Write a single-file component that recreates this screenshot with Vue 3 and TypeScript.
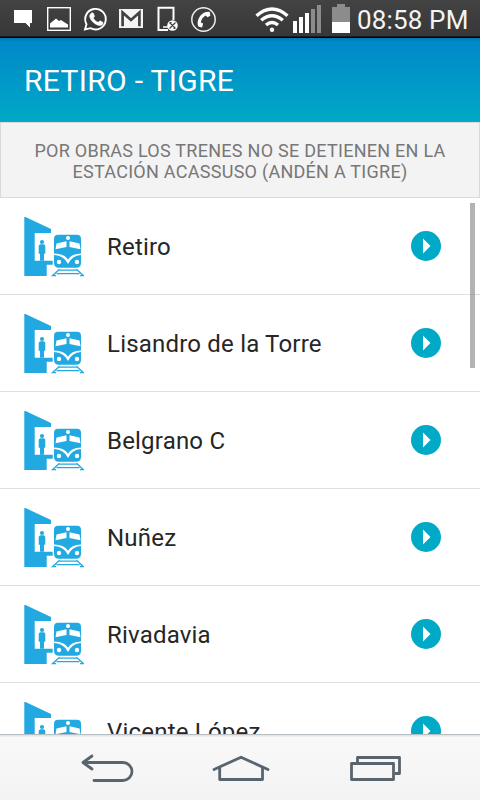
<script setup lang="ts">
const stations: string[] = ['Retiro', 'Lisandro de la Torre', 'Belgrano C', 'Nuñez', 'Rivadavia', 'Vicente López']
</script>

<template>
  <div class="screen">
    <div class="status">
      <svg class="status-icons" width="230" height="38" viewBox="0 0 230 38">
        <path d="M14 10h18v13h-2v4.500l-4.500-4.500H14z" fill="#fff" />
        <rect x="47.700" y="7.700" width="22.600" height="22.600" fill="none" stroke="#fff" stroke-width="1.400" />
        <path d="M50 27.500v-4l6-5 3 2.500 2-1 3 2 4 2.500v3z" fill="#fff" />
        <path d="M85 29.500l1.500-5.300a10.300 10.300 0 1 1 4 4z" fill="none" stroke="#fff" stroke-width="1.900" />
        <path d="M91.200 13.200c.8-.8 1.800-.7 2.200.1l1.100 2.700c.2.700-1.200 1.700-1 2.300 1 2 2.500 3.300 4.500 4 .7.200 1.500-1.700 2.100-1.500l2.700 1.400c.7.400-.1 2.300-1 2.800-1.700 1-3.600.6-6-.7-2.800-1.600-5.200-4.400-6-7-.4-1.700.2-3 1.400-4.100z" fill="#fff" stroke="#fff" stroke-width=".5" />
        <path d="M119 9h24v19h-24z" fill="#f4f4f4" />
        <path d="M122.600 26.300V12.500l8.400 7.500 8.400-7.500v13.800" fill="none" stroke="#424242" stroke-width="2.700" />
        <path d="M168 30h-9.500V7.800h15V20" fill="none" stroke="#fff" stroke-width="2" />
        <path d="M163 27h5" stroke="#fff" stroke-width="1.500" />
        <circle cx="172.500" cy="25.500" r="5.300" fill="#fff" />
        <path d="M169.500 22.500l6 6m0-6l-6 6M171 22l-.2 2.500M174 29l.2-2.500" stroke="#444" stroke-width="1.200" />
        <circle cx="203.500" cy="19.500" r="11.700" fill="none" stroke="#eee" stroke-width="1.500" />
        <path d="M206 12l3.600-.3.800 4-2.900 1.600-1.800-1.700c-2.500 1.300-4.400 4-4.900 7l2.300 1-1 3.800-3.500-.6c-1.700-2.300-1.200-6 .6-9.200 1.600-2.900 4-5 6.800-5.600z" fill="#fff" />
      </svg>
      <svg class="signal" width="112" height="38" viewBox="240 0 112 38">
        <g fill="none" stroke="#fff" stroke-width="3.400">
          <path d="M256.500 15.800q15.500-13.600 31 0" />
          <path d="M261.200 20.300q10.800-9.200 21.600 0" />
          <path d="M266 25q6-5.200 12 0" />
        </g>
        <circle cx="272" cy="29.800" r="2.200" fill="#fff" />
        <path d="M293 21h4v12h-4zM299 17h4v16h-4zM305 13h4v20h-4z" fill="#fff" />
        <path d="M311 9h4v24h-4zM317 5h4v28h-4zM337 4h8v3h5v15h-18V7h5z" fill="#8c8c8c" />
        <path d="M332 22h18v11h-18z" fill="#fff" />
      </svg>
      <span class="clock">08:58 PM</span>
    </div>

    <header class="header"><h1>RETIRO - TIGRE</h1></header>
    <div class="notice">POR OBRAS LOS TRENES NO SE DETIENEN EN LA<br />ESTACIÓN ACASSUSO (ANDÉN A TIGRE)</div>

    <main class="list">
      <div v-for="name in stations" :key="name" class="row">
        <svg class="station" width="60" height="60" viewBox="0 0 60 60">
          <g fill="#23a9e1">
            <path d="M.3 0h1.200L27 12v4H10.700v27.700h18v4h-6v11.300H.3z" />
            <circle cx="18" cy="25" r="2.100" />
            <path d="M16.500 27.300h3.200q1.600.3 1.600 2v7.400H20v7h-4v-7h-1.300v-7.400q0-1.700 1.800-2z" />
            <path d="M34 17.700h19q4 0 4 4v24q0 5-5 5H35q-5 0-5-5v-24q0-4 4-4z" />
          </g>
          <path d="M34.500 53.200h19M32.500 56.600h23M35.500 52.300l-7 6.400h3.500M52.500 52.300l7 6.400H56" fill="none" stroke="#23a9e1" stroke-width="1.300" />
          <g fill="#fff">
            <circle cx="44" cy="21" r="2" />
            <path d="M32.500 26.500l10-2.300v5.800L31.500 32.300zM55.500 26.500l-10-2.300v5.800L56.500 32.300z" />
            <circle cx="35" cy="45" r="2.200" />
            <circle cx="53" cy="45" r="2.200" />
            <path d="M30 36.500q11 .5 14 6.200 3-5.700 13-6.200v1.400q-9.500.8-13 9.100-3.500-8.300-14-9.100z" />
          </g>
        </svg>
        <span class="name">{{ name }}</span>
        <svg class="go" width="30" height="30" viewBox="0 0 30 30">
          <circle cx="15" cy="15" r="15" fill="#00a9c6" />
          <path d="M12 7.500l7.500 7.500-7.500 7.500z" fill="#fff" />
        </svg>
      </div>
      <div class="scrollbar"></div>
    </main>

    <nav class="nav">
      <svg width="480" height="64" viewBox="0 736 480 64" fill="none" stroke="#58646e" stroke-width="2.800" stroke-linecap="round" stroke-linejoin="round">
        <path d="M92 756l-9 6.500 9 6.500M84 762.500h39a9 9 0 0 1 0 18H94" />
        <path d="M214 769.500l27-12.300 27 12.300M219.700 768v11.500h42.800V768" />
        <path d="M351.500 763.500h42v16h-42zM357.500 763v-5.500h42v16H395" stroke-linecap="butt" />
      </svg>
    </nav>
  </div>
</template>

<style>
body { margin: 0; overflow: hidden; }
</style>
<style scoped>
.screen { width: 480px; height: 800px; display: flex; flex-direction: column; overflow: hidden; background: #fff; font-family: Roboto, sans-serif; }
.status { height: 38px; flex: none; box-sizing: border-box; display: flex; background: linear-gradient(#434343, #373737 36px, #000 37px); }
.status svg { flex: none; }
.signal { margin-left: 10px; }
.clock { margin-left: 5px; color: #f4f4f4; font-size: 26px; line-height: 40px; white-space: nowrap; letter-spacing: .15px; }
.header { height: 84px; flex: none; box-sizing: border-box; padding-left: 24px; background: linear-gradient(#0079b4, #0089c8 4px, #00a9c6); }
.header h1 { margin: 0; font-size: 30px; font-weight: 400; line-height: 85px; color: #fff; letter-spacing: .33px; }
.notice { height: 76px; flex: none; box-sizing: border-box; border: 1px solid #dadada; padding-top: 17px; background: #f3f3f3; color: #777; font-size: 18px; line-height: 21px; text-align: center; white-space: nowrap; letter-spacing: .27px; }
.list { flex: 1; min-height: 0; overflow: hidden; position: relative; }
.row { height: 97px; box-sizing: border-box; border-bottom: 1px solid #dfdfdf; display: flex; align-items: center; padding: 0 39px 0 24px; }
.station { flex: none; margin-top: 2px; }
.name { flex: 1; margin-left: 23px; padding-top: 2px; font-size: 24px; color: #262626; letter-spacing: .2px; }
.go { flex: none; }
.scrollbar { position: absolute; left: 470px; top: 5px; width: 5px; height: 165px; background: rgba(128, 128, 128, .6); }
.nav { height: 66px; flex: none; box-sizing: border-box; border-top: 1px solid #b5bdc3; background: linear-gradient(#e3e5e6 1px, #f9f9f9 2px, #f3f3f3); padding-top: 1px; }
.nav svg { display: block; }
</style>
